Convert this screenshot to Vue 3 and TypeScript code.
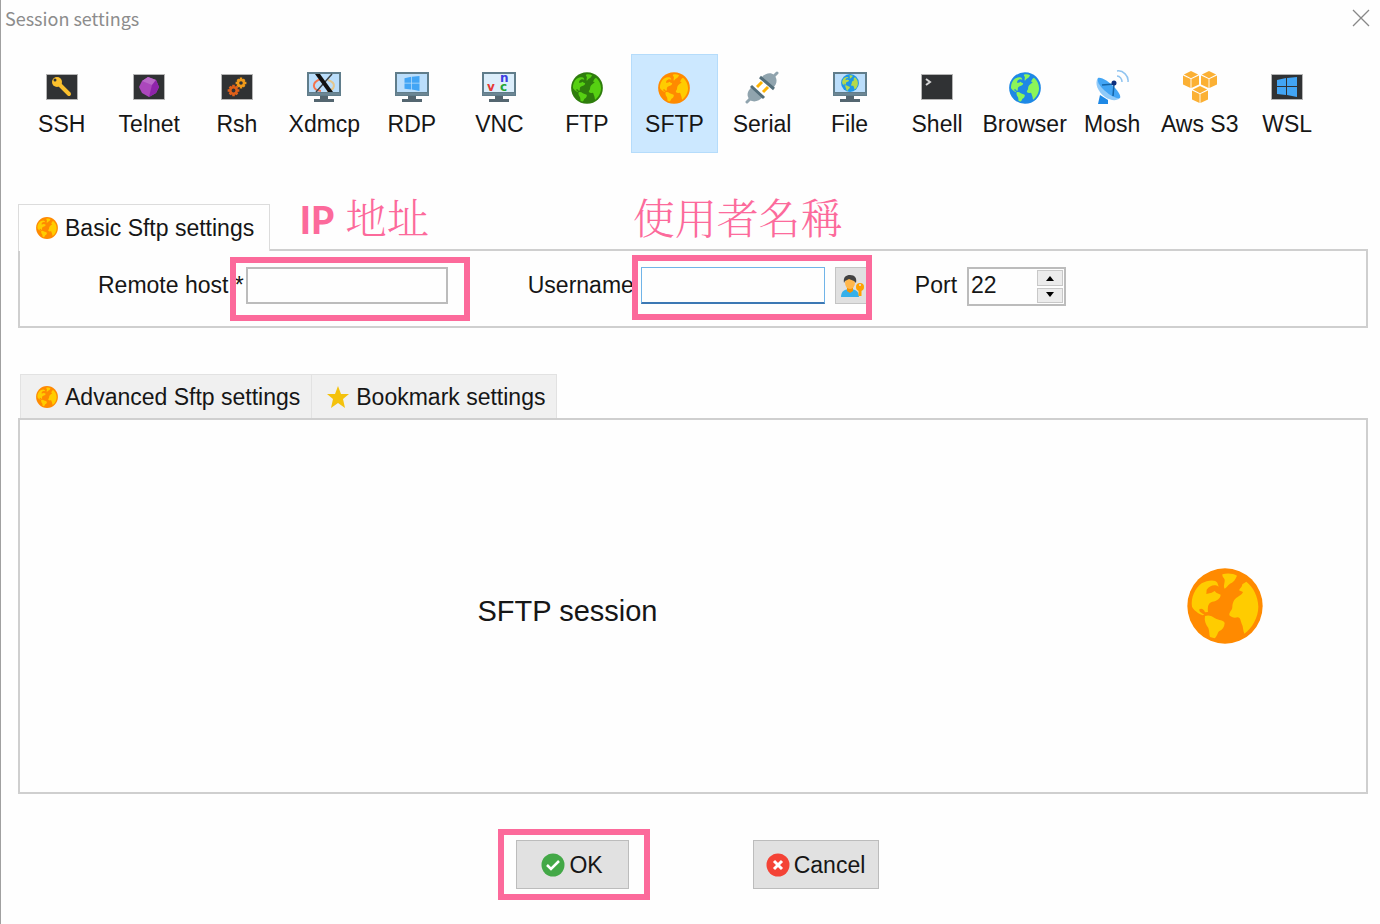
<script setup lang="ts">
import { ref } from 'vue'

interface SessionType {
  id: string
  label: string
}

const sessionTypes: SessionType[] = [
  { id: 'ssh', label: 'SSH' },
  { id: 'telnet', label: 'Telnet' },
  { id: 'rsh', label: 'Rsh' },
  { id: 'xdmcp', label: 'Xdmcp' },
  { id: 'rdp', label: 'RDP' },
  { id: 'vnc', label: 'VNC' },
  { id: 'ftp', label: 'FTP' },
  { id: 'sftp', label: 'SFTP' },
  { id: 'serial', label: 'Serial' },
  { id: 'file', label: 'File' },
  { id: 'shell', label: 'Shell' },
  { id: 'browser', label: 'Browser' },
  { id: 'mosh', label: 'Mosh' },
  { id: 'aws', label: 'Aws S3' },
  { id: 'wsl', label: 'WSL' },
]

const selected = ref('sftp')
const host = ref('')
const username = ref('')
const port = ref(22)

function stepPort(delta: number) {
  port.value = Math.min(65535, Math.max(1, Number(port.value) + delta))
}
</script>

<template>
  <main class="dialog">
    <svg class="sprite" aria-hidden="true">
      <defs>
        <symbol id="globe" viewBox="52 52 228 228">
          <circle cx="166" cy="166" r="113" fill="var(--sea)" />
          <g fill="var(--land)">
            <path d="M67 168C63 142 76 112 96 98C112 89 136 85 143 96L147 108C136 100 120 104 111 117L110 130L126 126L135 121L140 126L153 132C152 144 141 151 128 153C117 156 113 165 115 184L106 185C103 176 96 172 89 176C88 184 95 187 104 192L99 194C85 188 72 178 67 168Z" />
            <path d="M106 196C116 192 127 195 136 203C148 209 162 209 165 217C164 230 158 238 148 242C143 247 143 257 135 263L121 259C118 251 120 242 116 232C108 221 103 209 106 196Z" />
            <path d="M158 71C172 66 191 68 202 75C198 86 191 95 181 99C174 103 171 111 165 114C160 106 166 96 165 87C163 81 157 79 158 71Z" />
            <path d="M230 93C251 110 265 136 266 168C266 200 247 233 224 249C220 239 221 228 216 219C212 209 213 201 204 200C195 203 186 201 179 194C178 183 188 179 188 169C188 157 194 144 204 139C211 134 218 131 220 124L208 119C211 112 218 109 218 101Z" />
          </g>
        </symbol>
        <symbol id="terminal" viewBox="0 0 36 36">
          <rect x="2" y="4" width="32" height="26" fill="#b5b5b5" />
          <rect x="3" y="5" width="30" height="24" fill="#303234" />
        </symbol>
        <symbol id="monitor" viewBox="0 0 36 36">
          <path d="M1 2H35V26H1Z" fill="#607d8b" />
          <path d="M3 4H33V22H3Z" fill="#bbdefb" />
          <path d="M14 26H22V29H28V32H8V29H14Z" fill="#546670" />
          <path d="M2 24H34" stroke="#78909c" />
        </symbol>
        <symbol id="windows" viewBox="0 0 20 20">
          <path d="M0 3L9 1V9H0ZM10 1L20 0V9H10ZM0 10H9V18L0 17ZM10 10H20V20L10 18Z" fill="#42a5f5" />
        </symbol>
        <symbol id="gear" viewBox="-10 -10 20 20">
          <circle r="5" fill="none" stroke="var(--gear)" stroke-width="4" />
          <path d="M0-9V-6M0 6V9M-9 0H-6M6 0H9M-6-6L-4-4M4 4L6 6M6-6L4-4M-4 4L-6 6" stroke="var(--gear)" stroke-width="4" />
        </symbol>
        <symbol id="cube" viewBox="0 0 18 19">
          <path d="M9 0L17 4L9 8L1 4ZM0 5L8.500 9V19L0 15ZM9.500 9L18 5V15L9.500 19Z" fill="#fbb034" />
        </symbol>

        <symbol id="icon-ssh" viewBox="0 0 36 36">
          <use href="#terminal" width="36" height="36" />
          <path d="M14 13L25 24" stroke="#fbc02d" stroke-width="4" stroke-linecap="round" />
          <circle cx="13" cy="12" r="5" fill="#fbc02d" />
          <circle cx="11" cy="10" r="1.5" fill="#303234" />
        </symbol>
        <symbol id="icon-telnet" viewBox="0 0 36 36">
          <use href="#terminal" width="36" height="36" />
          <path d="M17 7L25 10L28 17L25 23L18 27L11 23L8 17L11 11Z" fill="#ab47bc" />
          <path d="M17 7L25 10L21 15L11 11Z" fill="#ba68c8" />
          <path d="M25 10L28 17L25 23L18 27L21 15Z" fill="#8e24aa" />
        </symbol>
        <symbol id="icon-rsh" viewBox="0 0 36 36">
          <use href="#terminal" width="36" height="36" />
          <use href="#gear" class="gear-light" x="16" y="7" width="12" height="12" />
          <use href="#gear" class="gear-dark" x="8" y="14" width="13" height="13" />
        </symbol>
        <symbol id="icon-xdmcp" viewBox="0 0 36 36">
          <use href="#monitor" width="36" height="36" />
          <path d="M15 9C5 12 6 20 15 21" fill="none" stroke="#f4744f" stroke-width="2" />
          <path d="M22 10C31 13 29 20 21 21" fill="none" stroke="#e4c68c" stroke-width="2" />
          <path d="M26 4L10 22" stroke="#3d4347" stroke-width="1.5" />
          <path d="M9 4H14L27 22H22Z" fill="#111" />
        </symbol>
        <symbol id="icon-rdp" viewBox="0 0 36 36">
          <use href="#monitor" width="36" height="36" />
          <use href="#windows" x="10" y="6" width="16" height="15" />
        </symbol>
        <symbol id="icon-vnc" viewBox="0 0 36 36">
          <use href="#monitor" width="36" height="36" />
          <path d="M3 4H33V22H3Z" fill="#dceefb" />
          <g class="vnc-letters">
            <text x="6" y="21" fill="#e53935">v</text>
            <text x="19" y="12" fill="#3d3de0">n</text>
            <text x="19" y="21" fill="#24a536">c</text>
          </g>
        </symbol>
        <symbol id="icon-ftp" viewBox="0 0 36 36">
          <use href="#globe" class="globe-green" x="2" y="2" width="32" height="32" />
        </symbol>
        <symbol id="icon-sftp" viewBox="0 0 36 36">
          <use href="#globe" class="globe-orange" x="2" y="2" width="32" height="32" />
        </symbol>
        <symbol id="icon-serial" viewBox="0 0 36 36">
          <path d="M33 3L29 7M3 32L7 28" stroke="#90a4ae" stroke-width="3" stroke-linecap="round" />
          <path d="M17 8C21 3 27 2 30 5C34 9 33 14 29 18Z" fill="#90a4ae" />
          <path d="M8 17C3 21 2 26 6 30C10 33 15 31 19 27Z" fill="#90a4ae" />
          <path d="M13 17L18 12M19 22L24 17" stroke="#ffb300" stroke-width="3" />
          <path d="M16 7L30 19M7 16L20 28" stroke="#546e7a" stroke-width="3" />
        </symbol>
        <symbol id="icon-file" viewBox="0 0 36 36">
          <use href="#monitor" width="36" height="36" />
          <use href="#globe" class="globe-file" x="9" y="4" width="18" height="18" />
        </symbol>
        <symbol id="icon-shell" viewBox="0 0 36 36">
          <use href="#terminal" width="36" height="36" />
          <path d="M7 9L11 12L7 15" fill="none" stroke="#d6d6d6" stroke-width="2" />
        </symbol>
        <symbol id="icon-browser" viewBox="0 0 36 36">
          <use href="#globe" class="globe-blue" x="2" y="2" width="32" height="32" />
        </symbol>
        <symbol id="icon-mosh" viewBox="0 0 36 36">
          <path d="M6 25L14 30V34H4Z" fill="#1e88e5" />
          <path d="M4 8C0 13 4 22 11 27C17 31 23 31 26 28Z" fill="#90caf9" />
          <path d="M4 8C8 7 15 12 20 17C25 22 27 26 26 28C21 29 14 24 9 19C5 15 3 11 4 8Z" fill="#42a5f5" />
          <path d="M8 15L20 14L19 26" fill="none" stroke="#1565a8" stroke-width="1.5" />
          <circle cx="20" cy="13" r="2.5" fill="#0d2f7e" />
          <path d="M23 6C26 6 28 9 28 12M23 1C29 0 35 6 34 12" fill="none" stroke="#90c4f0" stroke-width="1.5" />
        </symbol>
        <symbol id="icon-aws" viewBox="0 0 36 36">
          <use href="#cube" x="1" y="1" width="16" height="17" />
          <use href="#cube" x="19" y="1" width="16" height="17" />
          <use href="#cube" x="10" y="16" width="16" height="17" />
        </symbol>
        <symbol id="icon-wsl" viewBox="0 0 36 36">
          <use href="#terminal" width="36" height="36" />
          <use href="#windows" x="8" y="7" width="20" height="20" />
        </symbol>
      </defs>
    </svg>

    <header class="titlebar">
      <h1>Session settings</h1>
      <button type="button" class="close" aria-label="Close">
        <svg width="18" height="18" viewBox="0 0 18 18">
          <path d="M1 1L17 17M17 1L1 17" stroke="#888" stroke-width="1.3" />
        </svg>
      </button>
    </header>

    <nav class="types" aria-label="Session type">
      <button
        v-for="item in sessionTypes"
        :key="item.id"
        type="button"
        class="type"
        :class="{ active: item.id === selected }"
        :aria-pressed="item.id === selected"
        @click="selected = item.id"
      >
        <svg width="36" height="36" aria-hidden="true"><use :href="`#icon-${item.id}`" /></svg>
        <span>{{ item.label }}</span>
      </button>
    </nav>

    <section class="basic">
      <div class="tabs">
        <button type="button" class="tab current">
          <svg class="globe-orange" width="22" height="22" aria-hidden="true"><use href="#globe" /></svg>
          Basic Sftp settings
        </button>
      </div>
      <form class="panel fields" @submit.prevent>
        <div class="field host">
          <label for="host">Remote host *</label>
          <div class="control marked">
            <input id="host" v-model="host" type="text" />
            <span class="note"><b>IP</b> 地址</span>
          </div>
        </div>
        <div class="field user">
          <label for="username">Username</label>
          <div class="control marked">
            <input id="username" v-model="username" type="text" />
            <button type="button" class="pick" aria-label="Manage users">
              <svg width="26" height="26" viewBox="0 0 26 26">
                <path d="M1 24C1 18 5 16 10 16C15 16 19 18 19 24Z" fill="#35b0ea" />
                <path d="M7 14H13V18L10 20L7 18Z" fill="#f59300" />
                <ellipse cx="10" cy="10" rx="5" ry="6" fill="#ffb74d" />
                <path d="M4 10C3 4 6 2 10 2C15 2 17 5 16 10L14 8L9 6L5 8Z" fill="#424242" />
                <circle cx="20" cy="14" r="4" fill="#ffa000" />
                <path d="M20 15V23" stroke="#ffa000" stroke-width="3" />
                <circle cx="20" cy="12" r="1" fill="#e0e0e0" />
              </svg>
            </button>
            <span class="note">使用者名稱</span>
          </div>
        </div>
        <div class="field port">
          <label for="port">Port</label>
          <div class="spinner">
            <input id="port" v-model="port" type="text" inputmode="numeric" />
            <div class="steps">
              <button type="button" aria-label="Increase port" @click="stepPort(1)">
                <svg width="10" height="6" viewBox="0 0 10 6"><path d="M1 6L5 1L9 6Z" /></svg>
              </button>
              <button type="button" aria-label="Decrease port" @click="stepPort(-1)">
                <svg width="10" height="6" viewBox="0 0 10 6"><path d="M1 0L5 5L9 0Z" /></svg>
              </button>
            </div>
          </div>
        </div>
      </form>
    </section>

    <section class="details">
      <div class="tabs lower">
        <button type="button" class="tab">
          <svg class="globe-orange" width="22" height="22" aria-hidden="true"><use href="#globe" /></svg>
          Advanced Sftp settings
        </button>
        <button type="button" class="tab">
          <svg width="22" height="22" viewBox="0 0 22 22" aria-hidden="true">
            <path d="M11 0L14 8H22L16 13L18 22L11 17L4 22L6 13L0 8H8Z" fill="#f4c20d" />
          </svg>
          Bookmark settings
        </button>
      </div>
      <div class="panel summary">
        <p>SFTP session</p>
        <svg class="globe-orange" width="76" height="76" aria-hidden="true"><use href="#globe" /></svg>
      </div>
    </section>

    <footer class="actions">
      <div class="marked ok">
        <button type="button" class="action">
          <svg width="24" height="24" viewBox="0 0 24 24" aria-hidden="true">
            <circle cx="12" cy="12" r="11.5" fill="#43a847" />
            <path d="M6 12L10 16L18 8" fill="none" stroke="#fff" stroke-width="2.5" />
          </svg>
          OK
        </button>
      </div>
      <button type="button" class="action cancel">
        <svg width="24" height="24" viewBox="0 0 24 24" aria-hidden="true">
          <circle cx="12" cy="12" r="11.5" fill="#f44336" />
          <path d="M8 8L16 16M16 8L8 16" stroke="#fff" stroke-width="3" />
        </svg>
        Cancel
      </button>
    </footer>
  </main>
</template>

<style>
body {
  margin: 0;
  background: #fff;
}
</style>

<style scoped>
.dialog {
  --line: #cfcfcf;
  --pink: #fc6a9b;
  display: flex;
  flex-direction: column;
  min-height: 100vh;
  box-sizing: border-box;
  border-left: 1px solid #a0a0a0;
  background: #fefefe;
  color: #161616;
  font: 23px/36px "Liberation Sans", Arial, sans-serif;
}
.dialog * {
  box-sizing: border-box;
}
button,
input {
  margin: 0;
  padding: 0;
  border: 0;
  border-radius: 0;
  background: none;
  color: inherit;
  font: inherit;
}
svg {
  display: block;
  flex: none;
}
.sprite {
  position: absolute;
  width: 0;
  height: 0;
}
.globe-orange { --sea: #ff8a00; --land: #ffcc00; }
.globe-green { --sea: #2e7d0c; --land: #56d012; }
.globe-blue { --sea: #1e88e5; --land: #8cf558; }
.globe-file { --sea: #1e96e8; --land: #b5d94a; }
.gear-light { --gear: #f09a1a; }
.gear-dark { --gear: #e0601a; }
.vnc-letters {
  font: bold 12px "DejaVu Sans", sans-serif;
}

.titlebar {
  display: flex;
  justify-content: space-between;
  align-items: center;
  height: 36px;
  padding: 0 10px 0 4px;
}
h1 {
  margin: 0;
  color: #8c8c8c;
  font: 18px/36px "Noto Sans CJK TC", "Noto Sans", sans-serif;
}

.types {
  display: grid;
  grid-template-columns: repeat(15, 1fr);
  margin: 18px 49px 0 17px;
}
.type {
  display: flex;
  flex-direction: column;
  align-items: center;
  height: 99px;
  padding-top: 15px;
  border: 1px solid transparent;
  white-space: nowrap;
}
.type.active {
  border-color: #b5dcfb;
  background: #cce8ff;
}

.basic,
.details {
  margin: 51px 12px 0 17px;
}
.details {
  display: flex;
  flex: 1;
  flex-direction: column;
  margin-top: 46px;
}
.tabs {
  display: flex;
}
.tab {
  display: flex;
  align-items: center;
  gap: 7px;
  height: 47px;
  margin-bottom: -2px;
  padding: 0 15px 0 17px;
  border: 1px solid #dcdcdc;
  border-bottom: 0;
  white-space: nowrap;
}
.tab.current {
  z-index: 1;
  background: #fefefe;
}
.lower {
  padding-left: 2px;
}
.lower .tab {
  height: 44px;
  margin-bottom: 0;
  padding: 0 11px 0 15px;
  border-color: #e2e2e2;
  background: #f0f0f0;
}
.lower .tab + .tab {
  border-left: 0;
}
.panel {
  border: 2px solid var(--line);
}

.fields {
  display: flex;
  height: 79px;
  padding: 16px 0 0 78px;
}
.field {
  display: flex;
  align-items: flex-start;
  white-space: nowrap;
}
.field.host {
  gap: 2px;
}
.field.user {
  gap: 7px;
  margin-left: 80px;
}
.field.port {
  gap: 10px;
  margin-left: 43px;
}
.control {
  display: flex;
  gap: 10px;
}
.control input {
  height: 37px;
  padding: 0 6px;
  border: 2px solid #bcbcbc;
  outline: none;
}
.host input {
  width: 202px;
}
.user input {
  width: 184px;
  border: 1px solid #70b4e8;
  border-bottom: 2px solid #3c78b4;
}
.pick {
  display: flex;
  align-items: center;
  width: 37px;
  height: 37px;
  padding-left: 4px;
  border: 1px solid #c4c4c4;
  background: #e0e0e0;
}

.marked {
  position: relative;
}
.marked::after {
  position: absolute;
  border: 6px solid var(--pink);
  content: "";
  pointer-events: none;
}
.host .marked::after {
  inset: -10px -22px -17px -16px;
}
.user .marked::after {
  inset: -12px 0 -16px -9px;
}
.ok::after {
  inset: -11px -21px -11px -18px;
}
.note {
  position: absolute;
  top: -76px;
  color: var(--pink);
  font: 300 42px/50px "Noto Serif CJK TC", "Noto Sans CJK TC", serif;
}
.note b {
  font: 900 37px/50px Lato, sans-serif;
}
.host .note {
  left: 54px;
}
.user .note {
  left: -8px;
}

.spinner {
  display: flex;
  width: 99px;
  height: 39px;
  border: 2px solid #bcbcbc;
}
.spinner input {
  flex: 1;
  min-width: 0;
  height: 32px;
  padding-left: 2px;
  outline: none;
}
.steps {
  display: grid;
  gap: 2px;
  width: 28px;
  padding: 1px;
}
.steps button {
  display: grid;
  place-items: center;
  border: 1px solid #c8c8c8;
  background: #ececec;
}

.summary {
  display: grid;
  flex: 1;
  grid-template-columns: 5fr 1fr;
  align-items: center;
  justify-items: center;
  padding-right: 32px;
}
.summary p {
  margin: 0;
  padding-top: 10px;
  font-size: 29px;
}

.actions {
  display: flex;
  justify-content: center;
  gap: 124px;
  padding: 46px 0 35px 13px;
}
.action {
  display: flex;
  align-items: center;
  justify-content: center;
  gap: 4px;
  width: 113px;
  height: 49px;
  border: 1px solid #bcbcbc;
  background: #e1e1e1;
}
.cancel {
  width: 126px;
}
</style>
